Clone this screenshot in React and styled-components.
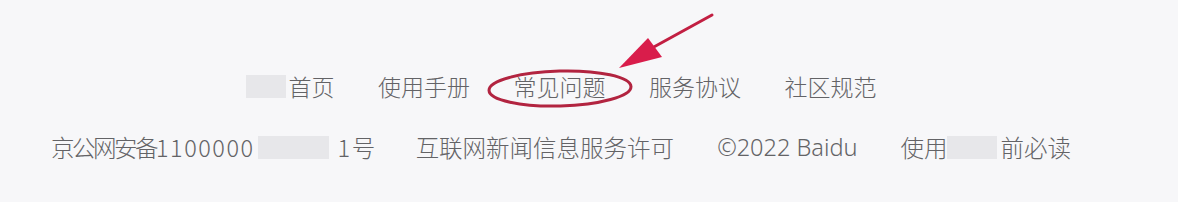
import styled, { createGlobalStyle } from "styled-components";

const GlobalStyle = createGlobalStyle`
  body {
    margin: 0;
    background: #f7f7f9;
    font-family: "Noto Sans CJK SC", "Noto Sans", sans-serif;
  }
`;

const Footer = styled.footer`
  position: relative;
  box-sizing: border-box;
  height: 202px;
  padding: 70px 56px 0 0;
  display: flex;
  flex-direction: column;
  align-items: center;
  gap: 29px;
  color: #636366;
  font-weight: 300;
  line-height: 32px;
`;

const Row = styled.div`
  display: flex;
  align-items: center;
  gap: ${({ gap }) => gap}px;
  font-size: ${({ size }) => size}px;
  white-space: nowrap;
`;

const Item = styled.span`
  position: relative;
  display: inline-flex;
  align-items: center;
  letter-spacing: ${({ spacing }) => spacing || 0}px;
`;

const Blur = styled.span`
  display: inline-block;
  width: ${({ w }) => w}px;
  height: 23px;
  background: #e7e7ea;
  margin: ${({ m }) => m || "0"};
`;

const Digits = styled.span`
  letter-spacing: 1.5px;
`;

const Latin = styled.span`
  font-family: "Noto Sans", sans-serif;
`;

const Circle = styled.svg`
  position: absolute;
  left: -27px;
  top: -1px;
  width: 146px;
  height: 39px;
  overflow: visible;
  pointer-events: none;
`;

const Arrow = styled.svg`
  position: absolute;
  left: 600px;
  top: 0;
  width: 130px;
  height: 80px;
  pointer-events: none;
`;

const App = () => {
  return (
    <>
      <GlobalStyle />
      <Footer>
        <Row size={23} gap={43.5}>
          <Item>
            <Blur w={40} m="0 3px 0 0" />
            首页
          </Item>
          <Item>使用手册</Item>
          <Item>
            常见问题
            <Circle viewBox="0 0 146 39">
              <ellipse
                cx="73"
                cy="19.5"
                rx="71"
                ry="17.5"
                fill="none"
                stroke="#b22440"
                strokeWidth="3"
                transform="rotate(-1.5 73 19.5)"
              />
            </Circle>
          </Item>
          <Item>服务协议</Item>
          <Item>社区规范</Item>
        </Row>
        <Row size={23.5} gap={43}>
          <Item spacing={-2.5}>
            京公网安备
            <Digits>1100000</Digits>
            <Blur w={71} m="0 9px 0 3px" />
            <Digits>1</Digits>
            <span>号</span>
          </Item>
          <Item>互联网新闻信息服务许可</Item>
          <Item>
            <Latin>©2022 Baidu</Latin>
          </Item>
          <Item>
            使用
            <Blur w={50} m="0 3px 0 0" />
            前必读
          </Item>
        </Row>
        <Arrow viewBox="0 0 130 80">
          <line
            x1="112"
            y1="15"
            x2="52"
            y2="48"
            stroke="#c21f42"
            strokeWidth="3"
            strokeLinecap="round"
          />
          <polygon points="19,68 48,38 62,57" fill="#d91d4b" />
        </Arrow>
      </Footer>
    </>
  );
};

export default App;
